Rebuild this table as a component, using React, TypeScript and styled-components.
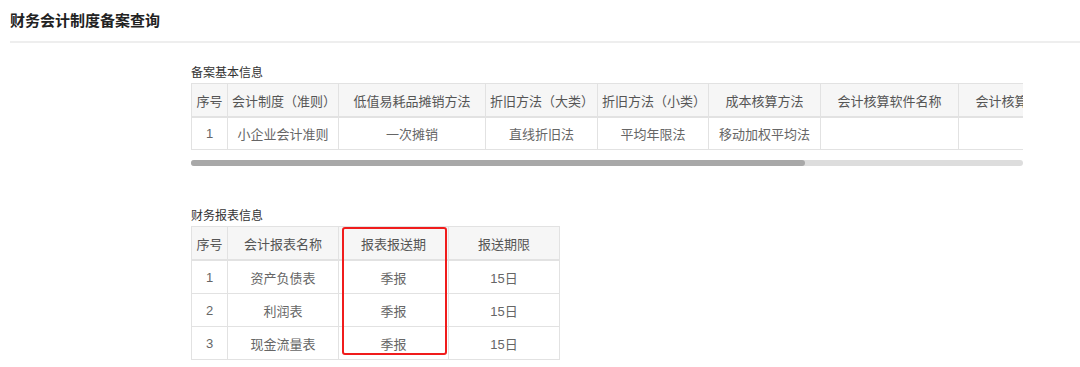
import React from 'react';
import styled, { createGlobalStyle } from 'styled-components';

const GlobalStyle = createGlobalStyle`
  body {
    margin: 0;
    background: #fff;
    font-family: "Liberation Sans", "Noto Sans CJK SC", sans-serif;
  }
`;

interface Column {
  title: string;
  width: number;
}

const VIEW_WIDTH = 832;

const BASIC_COLUMNS: Column[] = [
  { title: '序号', width: 36 },
  { title: '会计制度（准则）', width: 111 },
  { title: '低值易耗品摊销方法', width: 147 },
  { title: '折旧方法（大类）', width: 112 },
  { title: '折旧方法（小类）', width: 111 },
  { title: '成本核算方法', width: 112 },
  { title: '会计核算软件名称', width: 138 },
  { title: '会计核算软件版本', width: 138 },
  { title: '备注', width: 222 },
];

const BASIC_ROWS = [['1', '小企业会计准则', '一次摊销', '直线折旧法', '平均年限法', '移动加权平均法', '', '', '']];

const REPORT_COLUMNS: Column[] = [
  { title: '序号', width: 36 },
  { title: '会计报表名称', width: 111 },
  { title: '报表报送期', width: 110 },
  { title: '报送期限', width: 111 },
];

const REPORT_ROWS = [
  ['1', '资产负债表', '季报', '15日'],
  ['2', '利润表', '季报', '15日'],
  ['3', '现金流量表', '季报', '15日'],
];

const tableWidth = (columns: Column[]) => columns.reduce((sum, c) => sum + c.width, 0);

const DataTable: React.FC<{ columns: Column[]; rows: string[][]; rowHeight: number }> = ({
  columns,
  rows,
  rowHeight,
}) => (
  <Table style={{ width: tableWidth(columns) }}>
    <colgroup>
      {columns.map((c) => (
        <col key={c.title} style={{ width: c.width }} />
      ))}
    </colgroup>
    <thead>
      <tr>
        {columns.map((c) => (
          <Th key={c.title}>{c.title}</Th>
        ))}
      </tr>
    </thead>
    <tbody>
      {rows.map((row, i) => (
        <tr key={i}>
          {row.map((cell, j) => (
            <Td key={j} $height={rowHeight}>
              {cell}
            </Td>
          ))}
        </tr>
      ))}
    </tbody>
  </Table>
);

export default function App() {
  const thumbWidth = Math.round((VIEW_WIDTH * VIEW_WIDTH) / tableWidth(BASIC_COLUMNS));

  return (
    <>
      <GlobalStyle />
      <Page>
        <Header>
          <Title>财务会计制度备案查询</Title>
        </Header>
        <Content>
          <Section>
            <SectionLabel>备案基本信息</SectionLabel>
            <ScrollView>
              <DataTable columns={BASIC_COLUMNS} rows={BASIC_ROWS} rowHeight={31} />
            </ScrollView>
            <ScrollTrack>
              <ScrollThumb style={{ width: thumbWidth }} />
            </ScrollTrack>
          </Section>
          <Section $gap={42}>
            <SectionLabel>财务报表信息</SectionLabel>
            <TableWrap>
              <DataTable columns={REPORT_COLUMNS} rows={REPORT_ROWS} rowHeight={32} />
              <Highlight />
            </TableWrap>
          </Section>
        </Content>
      </Page>
    </>
  );
}

const Page = styled.div`
  width: 1080px;
  height: 367px;
  overflow: hidden;
`;

const Header = styled.div`
  margin-left: 10px;
  padding: 11px 0 10px;
  border-bottom: 2px solid #eeeeee;
`;

const Title = styled.h1`
  margin: 0;
  font-size: 15px;
  line-height: 20px;
  font-weight: bold;
  color: #222;
`;

const Content = styled.div`
  padding-left: 191px;
  padding-top: 22px;
`;

const Section = styled.div<{ $gap?: number }>`
  margin-top: ${(p) => p.$gap ?? 0}px;
`;

const SectionLabel = styled.div`
  font-size: 12px;
  line-height: 16px;
  color: #333;
  margin-bottom: 2px;
`;

const ScrollView = styled.div`
  width: ${VIEW_WIDTH}px;
  overflow: hidden;
`;

const ScrollTrack = styled.div`
  width: ${VIEW_WIDTH}px;
  height: 6px;
  margin-top: 10px;
  border-radius: 3px;
  background: #dddddd;
`;

const ScrollThumb = styled.div`
  height: 100%;
  border-radius: 3px;
  background: #a8a8a8;
`;

const TableWrap = styled.div`
  position: relative;
  display: inline-block;
`;

const Table = styled.table`
  border-collapse: collapse;
  table-layout: fixed;
  font-size: 13px;
`;

const Th = styled.th`
  height: 32px;
  padding: 0 4px;
  font-weight: normal;
  color: #555;
  background: #f6f6f6;
  border: 1px solid #e2e2e2;
  border-bottom-width: 2px;
  text-align: center;
  white-space: nowrap;
  overflow: hidden;
`;

const Td = styled.td<{ $height: number }>`
  height: ${(p) => p.$height}px;
  padding: 0 4px;
  color: #666;
  border: 1px solid #e2e2e2;
  text-align: center;
  white-space: nowrap;
`;

const Highlight = styled.div`
  position: absolute;
  left: 151px;
  top: 1px;
  width: 105px;
  height: 128px;
  box-sizing: border-box;
  border: 2px solid #f01c1c;
  border-radius: 3px;
  pointer-events: none;
`;
